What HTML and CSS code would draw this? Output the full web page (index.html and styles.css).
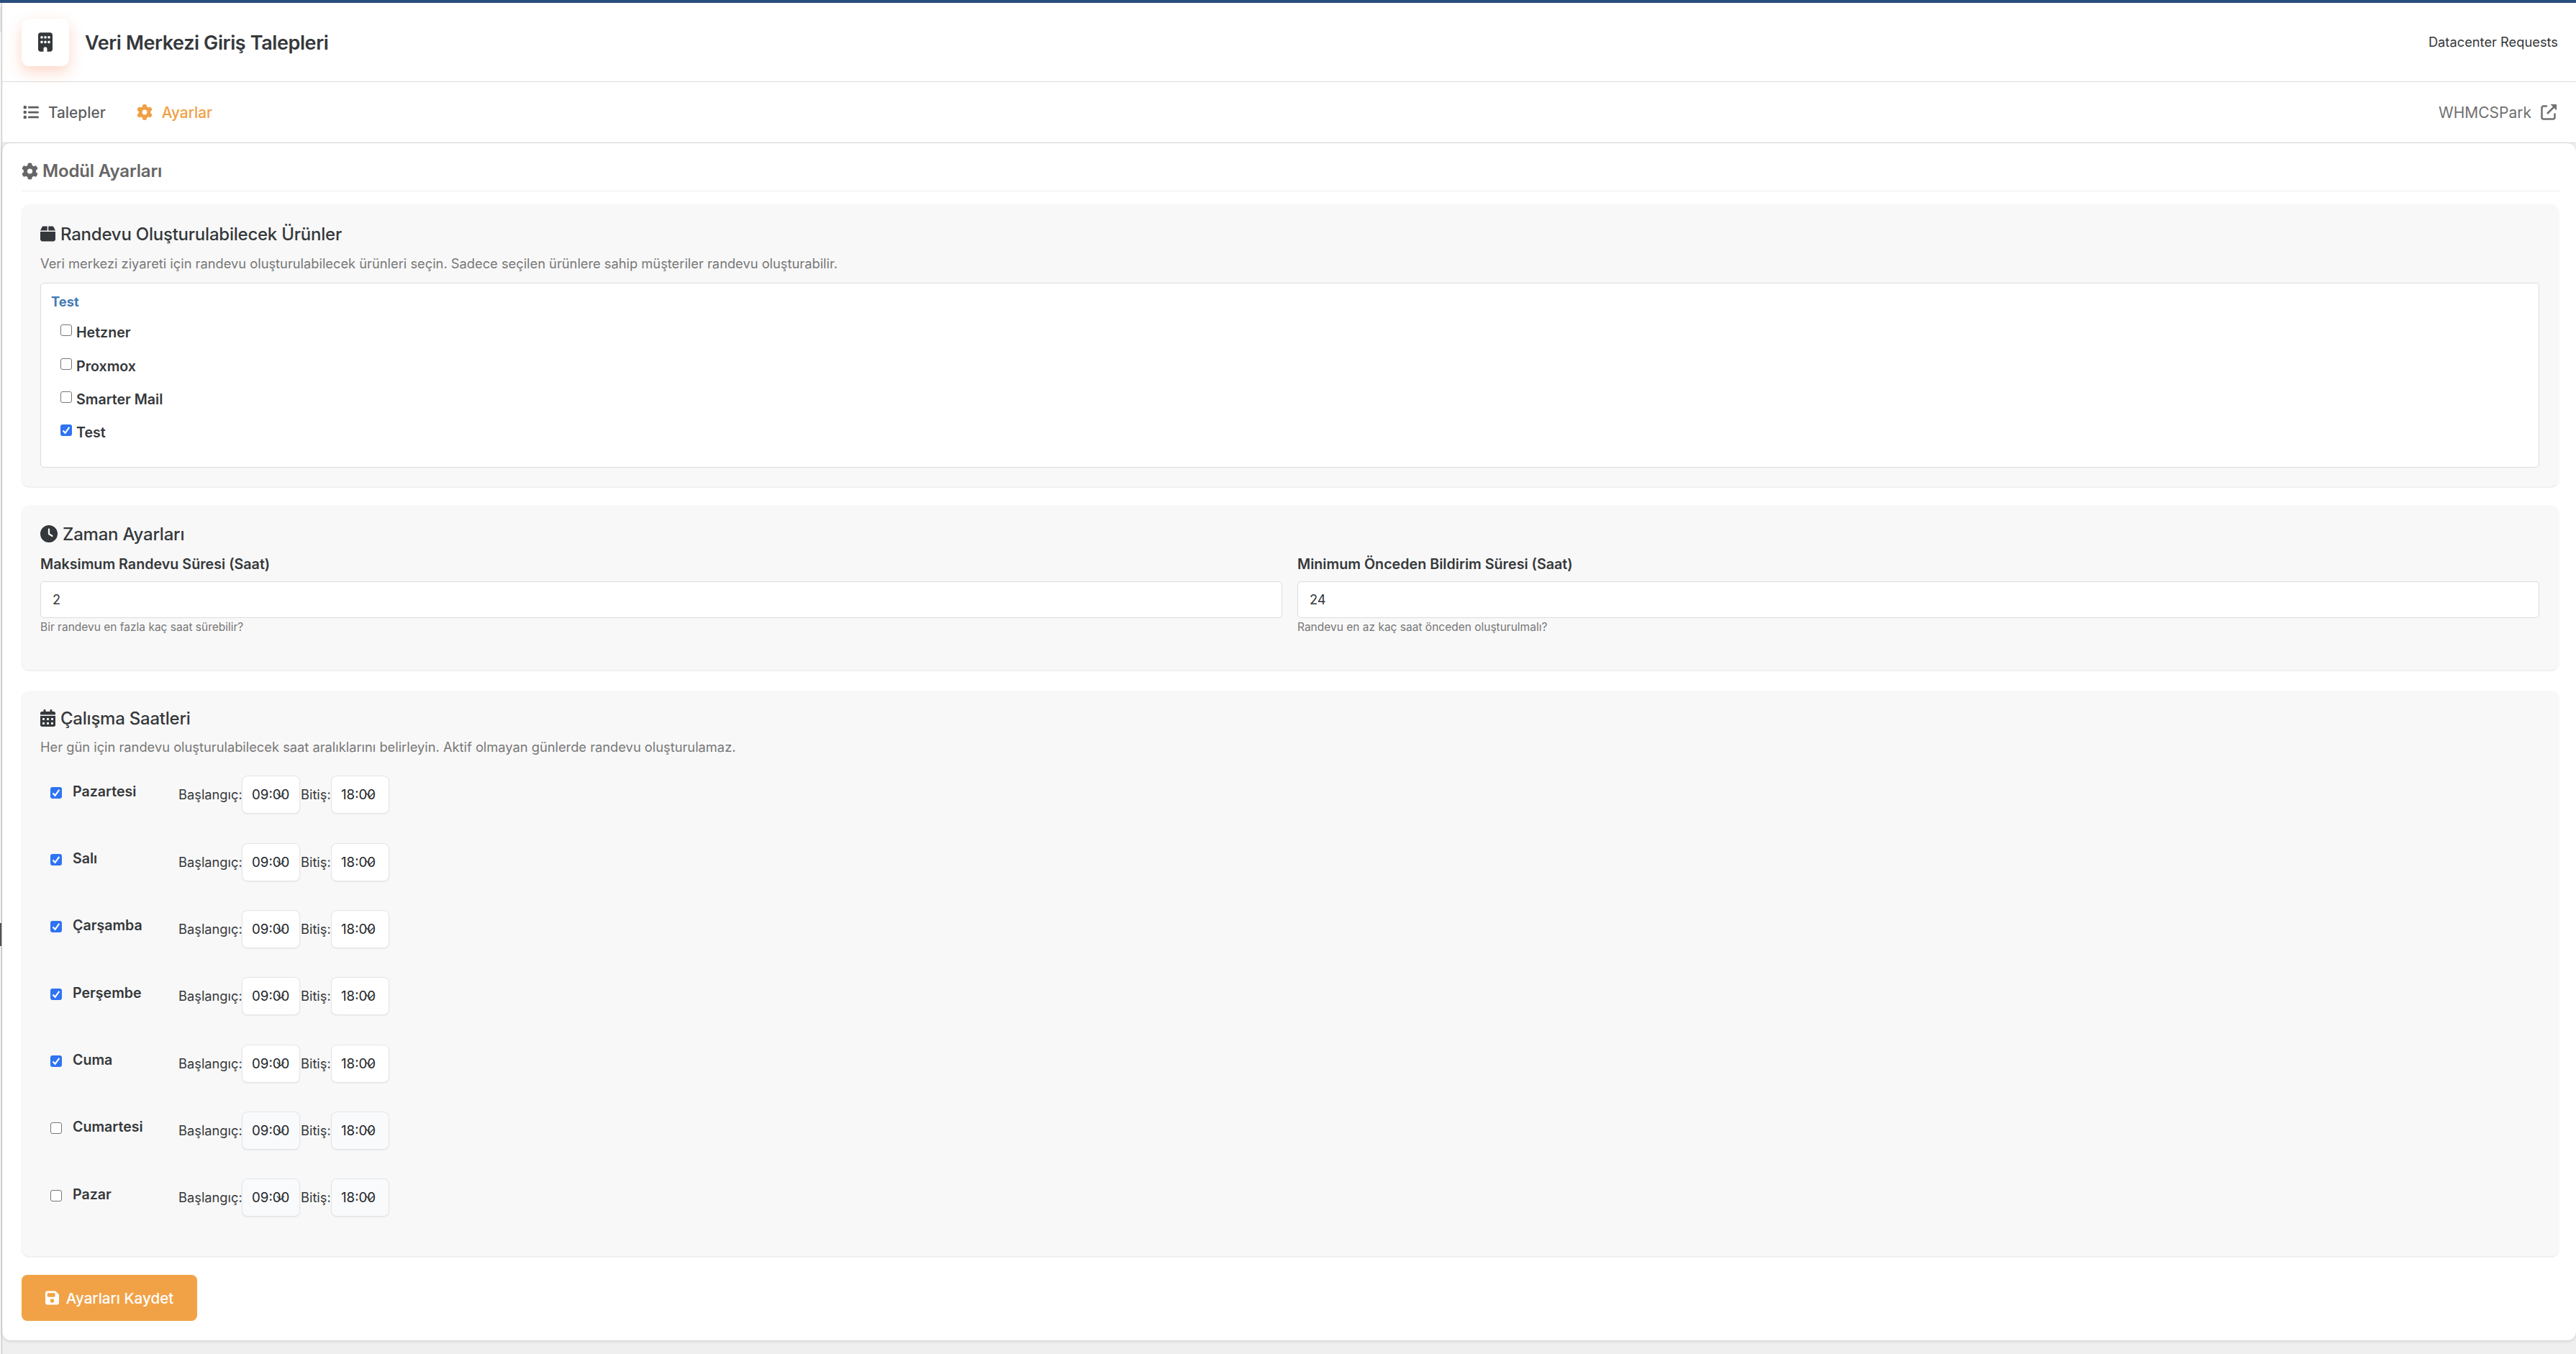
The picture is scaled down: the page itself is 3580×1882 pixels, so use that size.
FILE: index.html
```html
<!DOCTYPE html>
<html lang="tr">
<head>
    <meta charset="UTF-8">
    <meta name="viewport" content="width=device-width, initial-scale=1.0">
    <title>Veri Merkezi Giriş Talepleri</title>
    <link rel="stylesheet" href="styles.css">
</head>
<body>

    <!-- icons -->
    <svg class="sprite" xmlns="http://www.w3.org/2000/svg">
        <symbol id="i-building" viewBox="0 0 384 512"><path d="M64 0C29 0 0 29 0 64v384c0 35 29 64 64 64h80v-80c0-26 21-48 48-48s48 22 48 48v80h80c35 0 64-29 64-64V64c0-35-29-64-64-64H64zM64 112c0-9 7-16 16-16h32c9 0 16 7 16 16v32c0 9-7 16-16 16H80c-9 0-16-7-16-16v-32zm112-16h32c9 0 16 7 16 16v32c0 9-7 16-16 16h-32c-9 0-16-7-16-16v-32c0-9 7-16 16-16zm80 16c0-9 7-16 16-16h32c9 0 16 7 16 16v32c0 9-7 16-16 16h-32c-9 0-16-7-16-16v-32zM80 224h32c9 0 16 7 16 16v32c0 9-7 16-16 16H80c-9 0-16-7-16-16v-32c0-9 7-16 16-16zm80 16c0-9 7-16 16-16h32c9 0 16 7 16 16v32c0 9-7 16-16 16h-32c-9 0-16-7-16-16v-32zm112-16h32c9 0 16 7 16 16v32c0 9-7 16-16 16h-32c-9 0-16-7-16-16v-32c0-9 7-16 16-16z"/></symbol>
        <symbol id="i-list" viewBox="0 0 512 512"><path d="M40 48C26.700 48 16 58.700 16 72v48c0 13.300 10.700 24 24 24h48c13.300 0 24-10.700 24-24V72c0-13.300-10.700-24-24-24H40zM192 64c-17.700 0-32 14.300-32 32s14.300 32 32 32h288c17.700 0 32-14.300 32-32s-14.300-32-32-32H192zm0 160c-17.700 0-32 14.300-32 32s14.300 32 32 32h288c17.700 0 32-14.300 32-32s-14.300-32-32-32H192zm0 160c-17.700 0-32 14.300-32 32s14.300 32 32 32h288c17.700 0 32-14.300 32-32s-14.300-32-32-32H192zM16 232v48c0 13.300 10.700 24 24 24h48c13.300 0 24-10.700 24-24v-48c0-13.300-10.700-24-24-24H40c-13.300 0-24 10.700-24 24zm24 136c-13.300 0-24 10.700-24 24v48c0 13.300 10.700 24 24 24h48c13.300 0 24-10.700 24-24v-48c0-13.300-10.700-24-24-24H40z"/></symbol>
        <symbol id="i-gear" viewBox="0 0 512 512"><path d="M495.900 166.600c3.200 8.700 .5 18.400-6.400 24.600l-43.300 39.400c1.100 8.300 1.700 16.800 1.700 25.400s-.6 17.100-1.700 25.400l43.300 39.400c6.900 6.200 9.600 15.900 6.400 24.600c-4.400 11.900-9.700 23.300-15.800 34.300l-4.700 8.100c-6.600 11-14 21.400-22.100 31.200c-5.900 7.200-15.700 9.600-24.500 6.800l-55.700-17.700c-13.400 10.300-28.200 18.900-44 25.400l-12.500 57.100c-2 9.100-9 16.300-18.200 17.800c-13.800 2.300-28 3.500-42.500 3.500s-28.700-1.200-42.500-3.500c-9.200-1.500-16.200-8.700-18.200-17.800l-12.500-57.100c-15.800-6.500-30.600-15.100-44-25.400L83.100 425.900c-8.800 2.800-18.600 .3-24.500-6.800c-8.100-9.800-15.500-20.200-22.100-31.200l-4.700-8.100c-6.100-11-11.400-22.400-15.800-34.300c-3.200-8.700-.5-18.400 6.400-24.600l43.300-39.400C64.600 273.100 64 264.600 64 256s.6-17.100 1.700-25.400L22.400 191.200c-6.900-6.200-9.600-15.900-6.400-24.600c4.400-11.900 9.700-23.300 15.800-34.300l4.700-8.100c6.600-11 14-21.400 22.100-31.200c5.900-7.200 15.700-9.600 24.500-6.800l55.700 17.700c13.400-10.300 28.200-18.900 44-25.400l12.500-57.100c2-9.100 9-16.300 18.200-17.800C227.300 1.200 241.500 0 256 0s28.700 1.200 42.500 3.500c9.200 1.500 16.200 8.700 18.200 17.800l12.500 57.100c15.800 6.500 30.600 15.100 44 25.400l55.700-17.700c8.800-2.800 18.600-.3 24.500 6.800c8.100 9.800 15.500 20.200 22.100 31.200l4.700 8.100c6.100 11 11.400 22.400 15.800 34.300zM256 336a80 80 0 1 0 0-160 80 80 0 1 0 0 160z"/></symbol>
        <symbol id="i-external" viewBox="0 0 22 22"><path d="M9 2.500H4a2.500 2.500 0 0 0-2.500 2.500v13a2.500 2.500 0 0 0 2.500 2.500h13a2.500 2.500 0 0 0 2.500-2.500v-5.500M9 13L18 4" fill="none" stroke="currentColor" stroke-width="2.500"/><path d="M13.500 0H22v8.500z"/></symbol>
        <symbol id="i-box" viewBox="0 0 448 512"><path d="M50.700 58.500L0 160h208V32H93.700C75.500 32 58.900 42.300 50.700 58.500zM240 160h208L397.300 58.500C389.100 42.300 372.500 32 354.300 32H240v128zm208 32H0v224c0 35.300 28.700 64 64 64h320c35.300 0 64-28.700 64-64V192z"/></symbol>
        <symbol id="i-clock" viewBox="0 0 512 512"><path d="M256 0a256 256 0 1 1 0 512A256 256 0 1 1 256 0zM232 120v136c0 8 4 15.500 10.700 20l96 64c11 7.400 25.900 4.400 33.300-6.700s4.400-25.900-6.700-33.300L280 243.200V120c0-13.300-10.700-24-24-24s-24 10.700-24 24z"/></symbol>
        <symbol id="i-calendar" viewBox="0 0 448 512"><path d="M128 0c17.700 0 32 14.300 32 32v32h128V32c0-17.700 14.300-32 32-32s32 14.300 32 32v32h48c26.500 0 48 21.500 48 48v48H0v-48c0-26.500 21.500-48 48-48h48V32c0-17.700 14.300-32 32-32zM0 192h448v272c0 26.500-21.500 48-48 48H48c-26.500 0-48-21.500-48-48V192zm64 80v32c0 8.800 7.200 16 16 16h32c8.800 0 16-7.200 16-16v-32c0-8.800-7.200-16-16-16H80c-8.800 0-16 7.200-16 16zm128 0v32c0 8.800 7.200 16 16 16h32c8.800 0 16-7.200 16-16v-32c0-8.800-7.200-16-16-16h-32c-8.800 0-16 7.200-16 16zm144-16c-8.800 0-16 7.200-16 16v32c0 8.800 7.200 16 16 16h32c8.800 0 16-7.200 16-16v-32c0-8.800-7.200-16-16-16h-32zM64 400v32c0 8.800 7.200 16 16 16h32c8.800 0 16-7.200 16-16v-32c0-8.800-7.200-16-16-16H80c-8.800 0-16 7.200-16 16zm144-16c-8.800 0-16 7.200-16 16v32c0 8.800 7.200 16 16 16h32c8.800 0 16-7.200 16-16v-32c0-8.800-7.200-16-16-16h-32zm112 16v32c0 8.800 7.200 16 16 16h32c8.800 0 16-7.200 16-16v-32c0-8.800-7.200-16-16-16h-32c-8.800 0-16 7.200-16 16z"/></symbol>
        <symbol id="i-save" viewBox="0 0 448 512"><path d="M64 32C28.700 32 0 60.700 0 96v320c0 35.300 28.700 64 64 64h320c35.300 0 64-28.700 64-64V173.300c0-17-6.700-33.300-18.700-45.300L352 50.700C340 38.700 323.700 32 306.700 32H64zm0 96c0-17.700 14.300-32 32-32h192c17.700 0 32 14.300 32 32v64c0 17.700-14.300 32-32 32H96c-17.700 0-32-14.300-32-32v-64zm160 160a64 64 0 1 1 0 128 64 64 0 1 1 0-128z"/></symbol>
        <symbol id="i-check" viewBox="0 0 16 16"><path d="M3.500 8.500L6.600 11.800L12.300 3.800" fill="none" stroke="#fff" stroke-width="2.200"/></symbol>
    </svg>

    <div class="topbar"></div>
    <div class="layout">
        <div class="edge"></div>
        <div class="main">

            <header class="header">
                <div class="logo"><svg><use href="#i-building"/></svg></div>
                <h1>Veri Merkezi Giriş Talepleri</h1>
                <span class="header-note">Datacenter Requests</span>
            </header>

            <nav class="tabs">
                <a class="tab"><svg><use href="#i-list"/></svg>Talepler</a>
                <a class="tab active"><svg><use href="#i-gear"/></svg>Ayarlar</a>
                <a class="tab brand">WHMCSPark<svg><use href="#i-external"/></svg></a>
            </nav>

            <div class="content">
                <h2><svg><use href="#i-gear"/></svg>Modül Ayarları</h2>

                <section class="panel products">
                    <h3><svg class="narrow"><use href="#i-box"/></svg>Randevu Oluşturulabilecek Ürünler</h3>
                    <p>Veri merkezi ziyareti için randevu oluşturulabilecek ürünleri seçin. Sadece seçilen ürünlere sahip müşteriler randevu oluşturabilir.</p>
                    <div class="product-list">
                        <strong>Test</strong>
                        <label><span class="check"></span>Hetzner</label>
                        <label><span class="check"></span>Proxmox</label>
                        <label><span class="check"></span>Smarter Mail</label>
                        <label><span class="check on"><svg><use href="#i-check"/></svg></span>Test</label>
                    </div>
                </section>

                <section class="panel times">
                    <h3><svg><use href="#i-clock"/></svg>Zaman Ayarları</h3>
                    <div class="fields">
                        <div class="field">
                            <label>Maksimum Randevu Süresi (Saat)</label>
                            <div class="input">2</div>
                            <small>Bir randevu en fazla kaç saat sürebilir?</small>
                        </div>
                        <div class="field">
                            <label>Minimum Önceden Bildirim Süresi (Saat)</label>
                            <div class="input">24</div>
                            <small>Randevu en az kaç saat önceden oluşturulmalı?</small>
                        </div>
                    </div>
                </section>

                <section class="panel hours">
                    <h3><svg class="narrow"><use href="#i-calendar"/></svg>Çalışma Saatleri</h3>
                    <p>Her gün için randevu oluşturulabilecek saat aralıklarını belirleyin. Aktif olmayan günlerde randevu oluşturulamaz.</p>
                    <div id="days"></div>
                </section>

                <button class="save-btn"><svg><use href="#i-save"/></svg>Ayarları Kaydet</button>
            </div>

        </div>
    </div>

    <script>
        var days = [
            ["Pazartesi", true], ["Salı", true], ["Çarşamba", true], ["Perşembe", true],
            ["Cuma", true], ["Cumartesi", false], ["Pazar", false]
        ];

        function timeBox(value) {
            return '<span class="time">' + value + '<svg viewBox="0 0 12 8"><path d="M1 1.500L6 6.500L11 1.500"/></svg></span>';
        }

        document.getElementById("days").innerHTML = days.map(function(day) {
            var check = day[1]
                ? '<span class="check on"><svg><use href="#i-check"/></svg></span>'
                : '<span class="check"></span>';
            return '<div class="day' + (day[1] ? '' : ' off') + '">' + check +
                '<b>' + day[0] + '</b>' +
                '<span class="from">Başlangıç:</span>' + timeBox("09:00") +
                '<span class="to">Bitiş:</span>' + timeBox("18:00") + '</div>';
        }).join("");
    </script>

</body>
</html>
```
FILE: styles.css
```css
* {
    box-sizing: border-box;
}
body {
    margin: 0;
    font-family: Inter, "Liberation Sans", sans-serif;
    font-size: 18.300px;
    color: #35383b;
    background: #efefef;
    height: 1882px;
    overflow: hidden;
}
h1, h2, h3, p {
    margin: 0;
}
svg {
    fill: currentColor;
    display: block;
    flex: none;
}
.sprite {
    position: absolute;
    width: 0;
    height: 0;
}
.topbar {
    height: 4px;
    background: #284c7c;
}
.layout {
    display: flex;
    height: 1878px;
}
.edge {
    width: 3px;
    border-right: 1px solid #c4c4c6;
    background: linear-gradient(#f1f1f1 6px, #e2e2e2 6px, #e2e2e2 41px, #f3f3f3 41px, #f3f3f3 1279px, #555 1279px, #555 1311px, #f3f3f3 1311px);
}
.main {
    flex: 1;
}
.header {
    height: 110px;
    padding: 0 25px 12px 27px;
    background: #fff;
    border-bottom: 1px solid #dcdcdc;
    display: flex;
    align-items: center;
}
.logo {
    width: 66px;
    height: 66px;
    margin-top: 12px;
    border-radius: 10px;
    background: #fff;
    box-shadow: 0 8px 20px rgba(244, 120, 70, 0.3);
    display: flex;
    align-items: center;
    justify-content: center;
}
.logo svg {
    width: 20px;
    height: 27px;
}
h1 {
    margin: 13px 0 0 22px;
    font-size: 27px;
    font-weight: 600;
    letter-spacing: -0.400px;
}
.header-note {
    margin: 10px 0 0 auto;
}
.tabs {
    height: 85px;
    padding: 0 27px 0 29px;
    background: #fff;
    border-bottom: 1px solid #dcdcdc;
    display: flex;
    align-items: center;
}
.tab {
    display: flex;
    align-items: center;
    gap: 13px;
    margin-right: 43px;
    font-size: 20.800px;
    font-weight: 500;
    color: #5c5e60;
}
.tab svg {
    width: 22px;
    height: 22px;
}
.tab.active {
    color: #f0a044;
}
.tab.brand {
    margin: 0 0 0 auto;
    font-size: 21px;
    font-weight: 400;
    color: #707070;
}
.content {
    height: 1664px;
    padding: 22px 23px 0 27px;
    background: #fff;
    border-radius: 12px;
    box-shadow: 0 1px 4px rgba(0, 0, 0, 0.15);
}
h2 {
    height: 45px;
    padding-bottom: 11px;
    border-bottom: 1px solid #ebebeb;
    display: flex;
    align-items: center;
    gap: 6px;
    font-size: 24px;
    font-weight: 600;
    letter-spacing: -0.150px;
    color: #666;
}
h2 svg {
    width: 23px;
    height: 24px;
}
.panel {
    margin-left: -1px;
    padding: 26px 28px 0 27px;
    background: #f8f8f8;
    border-radius: 12px;
    border-bottom: 2px solid #f0f0f0;
}
h3 {
    display: flex;
    align-items: center;
    gap: 7px;
    height: 30px;
    font-size: 24px;
    font-weight: 500;
    letter-spacing: -0.230px;
}
h3 svg {
    width: 24px;
    height: 24px;
}
h3 svg.narrow {
    width: 21px;
}
.panel p {
    margin-top: 14px;
    line-height: 24px;
    color: #777;
}
.products {
    height: 394px;
    margin-top: 18px;
}
.product-list {
    height: 257px;
    margin-top: 15px;
    padding: 13px 14px 0;
    background: #fff;
    border: 1px solid #dcdcdc;
    border-radius: 5px;
}
.product-list strong {
    display: block;
    height: 24px;
    line-height: 24px;
    margin-bottom: 8px;
    font-weight: 700;
    color: #437ab5;
}
.product-list label {
    height: 46.400px;
    margin-left: 13px;
    display: flex;
    align-items: center;
    gap: 6px;
    font-size: 19.600px;
    font-weight: 600;
}
.check {
    width: 16px;
    height: 16px;
    flex: none;
    background: #fff;
    border: 1px solid #767676;
    border-radius: 3px;
}
.product-list .check {
    margin-bottom: 6px;
}
.check.on {
    background: #2f73f3;
    border: none;
}
.check svg {
    width: 16px;
    height: 16px;
}
.times {
    height: 231px;
    margin-top: 24px;
    padding-top: 25px;
}
.fields {
    display: flex;
    gap: 21px;
    margin-top: 15px;
}
.field {
    flex: 1;
}
.field label {
    display: block;
    line-height: 24px;
    font-size: 19.700px;
    font-weight: 600;
}
.input {
    height: 51px;
    margin-top: 12px;
    padding-left: 16px;
    line-height: 49px;
    background: #fff;
    border: 1px solid #dcdcdc;
    border-radius: 5px;
}
.field small {
    display: block;
    margin-top: 3px;
    line-height: 20px;
    font-size: 15.500px;
    color: #777;
}
.hours {
    height: 788px;
    margin-top: 27px;
    padding-top: 23px;
}
.hours p {
    margin-top: 13px;
}
#days {
    margin-top: 5px;
}
.day {
    height: 93.350px;
    padding-left: 14px;
    display: flex;
    align-items: center;
}
.day b {
    width: 147px;
    margin: -4px 0 0 15px;
    font-size: 19.600px;
    font-weight: 600;
}
.from, .to {
    margin-top: 5px;
}
.from {
    width: 88px;
}
.to {
    width: 42px;
    margin-left: 1px;
}
.time {
    position: relative;
    width: 81px;
    height: 53px;
    margin-top: 6px;
    padding-left: 13px;
    line-height: 51px;
    font-size: 18.700px;
    background: #fff;
    border: 1px solid #e3e5e8;
    border-radius: 8px;
    box-shadow: 0 1px 2px rgba(0, 0, 0, 0.06);
    color: #212529;
}
.off .time {
    background: #f9fafc;
}
/* the arrow sits over the digits in such a narrow box */
.time svg {
    position: absolute;
    right: 20px;
    top: 22px;
    width: 12px;
    height: 8px;
    fill: none;
    stroke: #343a40;
    stroke-width: 1.300;
}
.save-btn {
    width: 244px;
    height: 64px;
    margin-top: 24px;
    border: none;
    border-radius: 8px;
    background: #f2a246;
    color: #fff;
    font-family: inherit;
    font-size: 20.600px;
    font-weight: 500;
    display: flex;
    align-items: center;
    justify-content: center;
    gap: 10px;
}
.save-btn svg {
    width: 19px;
    height: 22px;
}
```
